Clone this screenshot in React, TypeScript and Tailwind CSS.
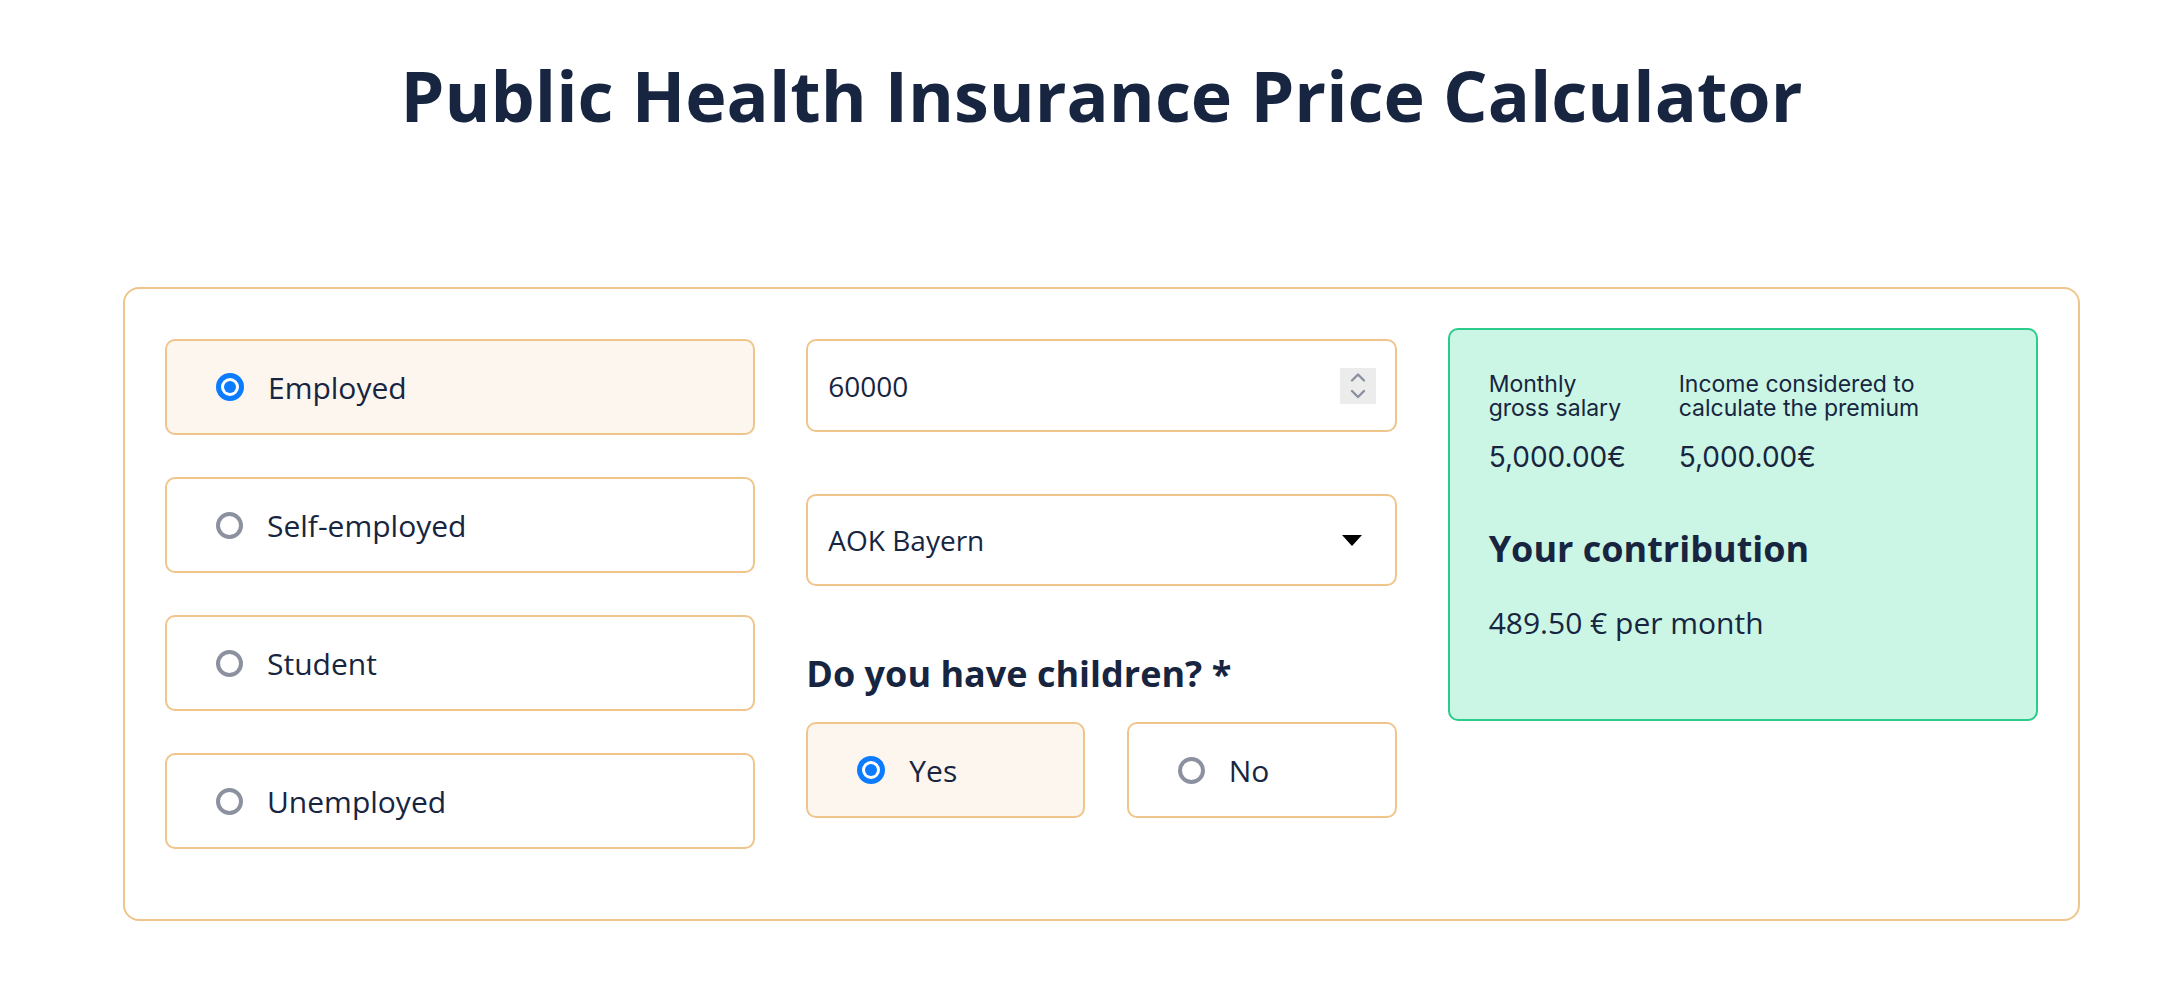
import { useState } from 'react';

const statuses = ['Employed', 'Self-employed', 'Student', 'Unemployed'];

const Radio = ({ checked }: { checked: boolean }) =>
  checked ? (
    <span className="flex h-[28px] w-[28px] shrink-0 items-center justify-center rounded-full border-[5px] border-[#0b7bff] bg-white">
      <span className="h-[12px] w-[12px] rounded-full bg-[#0b7bff]"></span>
    </span>
  ) : (
    <span className="h-[27px] w-[27px] shrink-0 rounded-full border-[4px] border-[#8c91a0] bg-white"></span>
  );

const Option = ({
  label,
  checked,
  onClick,
  className = '',
}: {
  label: string;
  checked: boolean;
  onClick: () => void;
  className?: string;
}) => (
  <button
    type="button"
    onClick={onClick}
    className={`flex h-[96px] items-center gap-[24px] rounded-[10px] border-2 border-[#f0c58c] pl-[49px] pr-[24px] text-left text-[30px] text-[#172540] ${
      checked ? 'bg-[#fdf6ef]' : 'bg-white'
    } ${className}`}
  >
    <Radio checked={checked} />
    <span>{label}</span>
  </button>
);

const App = () => {
  const [status, setStatus] = useState('Employed');
  const [children, setChildren] = useState('Yes');

  return (
    <div className="min-h-screen bg-white pl-[123px] pr-[96px] pt-[52px] font-['Open_Sans',sans-serif] text-[#172540]">
      {/* Titel */}
      <h1 className="text-center text-[70px] leading-[86px] font-bold">Public Health Insurance Price Calculator</h1>

      {/* Rechner */}
      <div className="mt-[149px] flex gap-[51px] rounded-[16px] border-2 border-[#f0c58c] px-[40px] pt-[39px] pb-[70px]">
        {/* Status */}
        <div className="flex flex-1 flex-col gap-[42px] pt-[11px]">
          {statuses.map((s) => (
            <Option key={s} label={s} checked={status === s} onClick={() => setStatus(s)} />
          ))}
        </div>

        {/* Eingaben */}
        <div className="flex flex-1 flex-col pt-[11px]">
          <div className="flex h-[93px] items-center justify-between rounded-[10px] border-2 border-[#f0c58c] pl-[20px] pr-[19px]">
            <span className="text-[28px]">60000</span>
            <span className="h-[36px] w-[36px] bg-[#ececec]">
              <svg width="36" height="36" viewBox="0 0 36 36" fill="none" stroke="#8b90a0" strokeWidth="2.4" strokeLinecap="round" strokeLinejoin="round">
                <path d="M12 12.5 L18 6.5 L24 12.5" />
                <path d="M12 23 L18 29 L24 23" />
              </svg>
            </span>
          </div>

          <div className="mt-[62px] flex h-[92px] items-center justify-between rounded-[10px] border-2 border-[#f0c58c] pl-[20px] pr-[33px]">
            <span className="text-[28px]">AOK Bayern</span>
            <svg width="20" height="11" viewBox="0 0 20 11">
              <path d="M0 0 H20 L10 11 Z" fill="#000" />
            </svg>
          </div>

          <h3 className="mt-[66px] text-[36px] leading-[43px] font-bold">Do you have children? *</h3>

          <div className="mt-[27px] flex gap-[42px]">
            <Option label="Yes" checked={children === 'Yes'} onClick={() => setChildren('Yes')} className="flex-auto" />
            <Option label="No" checked={children === 'No'} onClick={() => setChildren('No')} className="flex-auto" />
          </div>
        </div>

        {/* Ergebnis */}
        <div className="flex-1">
          <div className="h-[393px] rounded-[10px] border-2 border-[#2bcb8c] bg-[#cbf5e4] pt-[42px] pl-[39px]">
            <div className="grid grid-cols-[190px_1fr] font-['Inter',sans-serif] text-[#172540]">
              <p className="text-[23px] leading-[24px]">
                Monthly
                <br />
                gross salary
              </p>
              <p className="text-[23px] leading-[24px]">
                Income considered to
                <br />
                calculate the premium
              </p>
              <p className="mt-[20px] text-[28px] leading-[34px]">5,000.00€</p>
              <p className="mt-[20px] text-[28px] leading-[34px]">5,000.00€</p>
            </div>
            <h3 className="mt-[53px] text-[36px] leading-[43px] font-bold">Your contribution</h3>
            <p className="mt-[33px] text-[30px] leading-[40px]">489.50 € per month</p>
          </div>
        </div>
      </div>
    </div>
  );
};

export default App;
